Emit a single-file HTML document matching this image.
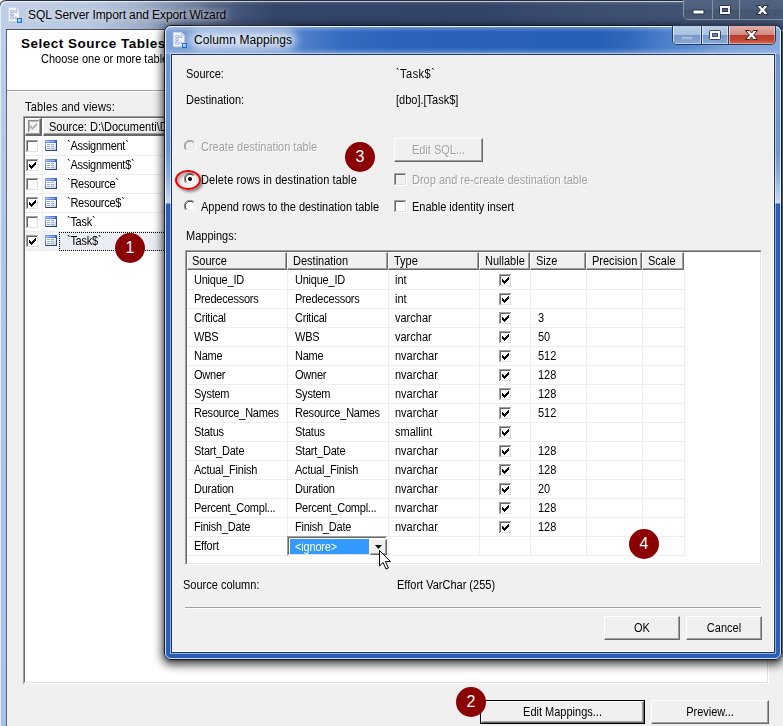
<!DOCTYPE html>
<html lang="en"><head><meta charset="utf-8"><title>SQL Server Import and Export Wizard</title>
<style>
html,body{margin:0;padding:0;}
body{width:783px;height:726px;overflow:hidden;background:#f0f0f0;font-family:"Liberation Sans",sans-serif;font-size:11px;line-height:13px;color:#000;}
#scr{position:relative;width:783px;height:726px;overflow:hidden;background:#f0f0f0;}
#scr div,#scr span,#scr i,#scr b{position:absolute;box-sizing:border-box;white-space:nowrap;}
.t{font-size:11px;line-height:13px;}
/* outer window */
#w1t{left:-1px;top:0;width:785px;height:30px;border-top:1px solid #262e3c;border-left:1px solid #2a3342;border-top-left-radius:7px;box-shadow:inset 1px 1px 0 rgba(255,255,255,.65);background:linear-gradient(180deg,rgba(255,255,255,.18) 0,rgba(255,255,255,0) 4px,rgba(0,0,0,0) 19px,rgba(0,0,10,.0) 30px),linear-gradient(90deg,#c0cfe6 0px,#b9c9e0 90px,#a2b2cc 135px,#8090ae 175px,#596b8b 210px,#42547a 240px,#34456a 275px,#33446a 480px,#3d4f70 600px,#44577a 783px);}
#w1tl{display:none;}
#w1tl2{display:none;}
#w1lf{left:0;top:8px;width:7px;height:718px;background:linear-gradient(180deg,#bfcfe8 0,#b3c7e8 200px,#a9c0e6 726px);}
#w1lfh{left:0;top:8px;width:1px;height:718px;background:#e4ebf5;}
#w1in{left:6px;top:29px;width:777px;height:697px;border-left:1px solid #5a6577;border-top:1px solid #4b5566;background:#f0f0f0;}
#w1hd{left:7px;top:30px;width:776px;height:60px;background:#fff;}
#w1sep{left:7px;top:90px;width:776px;height:2px;border-top:1px solid #a0a0a0;background:#fff;}
#ttl1{left:28px;top:7px;font-size:12px;line-height:16px;color:#000;letter-spacing:-0.100px;text-shadow:0 0 5px rgba(255,255,255,.7),0 0 9px rgba(255,255,255,.45),0 0 13px rgba(255,255,255,.3);}
#h1{left:21px;top:36px;font-size:13.500px;line-height:16px;font-weight:bold;letter-spacing:0.500px;}
#h2{left:41px;top:53px;}
#lbl1{left:25px;top:100px;letter-spacing:.2px;}
/* list box */
#lb{left:23px;top:116px;width:746px;height:568px;background:#fff;border-left:2px solid #696969;border-top:2px solid #696969;border-right:1px solid #fff;border-bottom:1px solid #fff;}
#lb::before{content:"";position:absolute;left:-2px;top:-2px;right:0;bottom:0;border-left:1px solid #a0a0a0;border-top:1px solid #a0a0a0;border-right:1px solid #e3e3e3;border-bottom:1px solid #e3e3e3;}
.lh{top:0;height:18px;background:#f0f0f0;border-top:1px solid #fff;border-left:1px solid #fff;border-right:2px solid #696969;border-bottom:2px solid #696969;}
.lh::after{content:"";position:absolute;right:0;bottom:0;left:0;top:0;border-right:1px solid #a0a0a0;border-bottom:1px solid #a0a0a0;}
.lr{left:0;height:19px;width:743px;border-bottom:1px solid #ededed;}
.lr .x{left:42px;top:3px;letter-spacing:-0.300px;}
.lvl{left:17px;top:18px;width:1px;height:115px;background:#ededed;z-index:2;}
/* classic checkbox */
.cb{width:11px;height:11px;background:#fff;border-top:1px solid #a0a0a0;border-left:1px solid #a0a0a0;border-right:1px solid #e3e3e3;border-bottom:1px solid #e3e3e3;display:block;}
.cb::before{content:"";position:absolute;left:0;top:0;right:0;bottom:0;border-top:1px solid #696969;border-left:1px solid #696969;}
.ck::after{content:"";position:absolute;left:2px;top:0px;width:3px;height:6px;border-right:2px solid #000;border-bottom:2px solid #000;transform:rotate(40deg);}
.cb13{width:13px;height:13px;}
/* icons */
.ti{width:13px;height:11px;}
/* buttons */
.btn{background:#f0f0f0;border-top:1px solid #fff;border-left:1px solid #fff;border-right:1px solid #696969;border-bottom:1px solid #696969;text-align:center;}
.btn::before{content:"";position:absolute;left:0;top:0;right:0;bottom:0;border-right:1px solid #a0a0a0;border-bottom:1px solid #a0a0a0;}
.btn span{left:0;right:0;text-align:center;}
/* badge */
.bd{width:30px;height:30px;border-radius:50%;background:#8b0000;color:#fff;font-size:16px;line-height:30px;text-align:center;}
/* dialog */
#sh{left:160px;top:22px;width:628px;height:646px;border-radius:10px;box-shadow:0 0 0 1px rgba(0,0,0,.0);background:transparent;}
#dlg{left:164px;top:25px;width:618px;height:635px;border-radius:7px;border:1px solid #101c33;background:linear-gradient(180deg,#9dbae3 0,#7fa2d8 5px,#7398d0 30px,#7096d0 125px,#8eafde 150px,#c8daf0 177px,#2a5fb8 178px,#2a5fb8 635px);box-shadow:0 3px 10px 2px rgba(0,0,0,.7),0 1px 3px 0 rgba(0,0,0,.3);}
#dlgi{left:0;top:0;right:0;bottom:0;border-radius:6px;border:1px solid rgba(255,255,255,.8);}
#dtb{left:1px;top:1px;width:614px;height:27px;border-radius:5px 5px 0 0;background:linear-gradient(180deg,rgba(255,255,255,.3) 0,rgba(255,255,255,0) 5px,rgba(255,255,255,0) 21px,rgba(170,200,240,.5) 27px),linear-gradient(100deg,#7fa2d8 0,#7a9dd4 25px,#6c93d0 100px,#4c7dc9 140px,#356cc1 175px,#2b63ba 230px,#2861b7 330px,#2660b6 430px,#2f67bb 455px,#4a7dc9 490px,#5a8ad0 520px,#7da3da 560px,#86aadc 613px);}
#glow2{left:25px;top:5px;width:106px;height:18px;border-radius:9px;background:rgba(255,255,255,.72);filter:blur(5px);}
#dc{left:6px;top:28px;width:604px;height:599px;box-shadow:0 0 0 1px rgba(255,255,255,.5),inset -1px -1px 0 #fff;background:#f0f0f0;border:1px solid #22345a;}
#ttl2{left:29px;top:6px;font-size:12px;line-height:16px;letter-spacing:.1px;}
.dis{color:#a0a0a0;text-shadow:1px 1px 0 #fff;}
/* radio */
.rd{width:12px;height:12px;border-radius:50%;background:#fff;border:1px solid #808080;box-shadow:inset 1px 1px 0 #404040, 1px 1px 0 #fff;}
.rd.on::after{content:"";position:absolute;left:3px;top:3px;width:4px;height:4px;border-radius:50%;background:#000;}
.rd.off{background:#f0f0f0;border-color:#a0a0a0;box-shadow:inset 1px 1px 0 #a0a0a0,1px 1px 0 #fff;}
/* grid */
#gw{left:185px;top:250px;width:577px;height:315px;background:#fff;border-top:1px solid #a0a0a0;border-left:1px solid #a0a0a0;border-right:1px solid #fff;border-bottom:1px solid #fff;}
#gw::before{content:"";position:absolute;left:0;top:0;right:0;bottom:0;border-top:1px solid #696969;border-left:1px solid #696969;border-right:1px solid #e3e3e3;border-bottom:1px solid #e3e3e3;}
.grid{left:187px;top:252px;width:573px;height:311px;}
.gh{top:0;height:18px;background:#f0f0f0;border-top:1px solid #fff;border-left:1px solid #fff;border-right:1px solid #696969;border-bottom:1px solid #696969;}
.gh::before{content:"";position:absolute;left:0;top:0;right:0;bottom:0;border-right:1px solid #a0a0a0;border-bottom:1px solid #a0a0a0;}
.gh span{left:5px;top:2px;}
.gh:first-child span{left:4px;}
.vl{top:18px;width:1px;height:286px;background:#eeeeee;}
.gr{left:0;width:498px;height:19px;border-bottom:1px solid #eeeeee;}
.gr .c{top:3px;letter-spacing:-0.250px;}

/* caption buttons */
.cap{border:1px solid #2a3a58;border-radius:0 0 5px 5px;overflow:hidden;}
.cbn{top:0;height:100%;border-left:1px solid #2a3a58;background:linear-gradient(180deg,#bccfe9 0,#a9c0e2 48%,#7797c9 52%,#86a8d9 100%);box-shadow:inset 1px 0 0 rgba(255,255,255,.6),inset -1px -1px 0 rgba(255,255,255,.45);}
.cbn:first-child{border-left:0;}
.cbn.cls{background:linear-gradient(180deg,#e3aea8 0,#d08a82 48%,#bd3a28 52%,#c34732 80%,#d47258 100%);box-shadow:inset 1px 0 0 rgba(255,255,255,.5),inset -1px -1px 0 rgba(255,255,255,.35);}
.cap.dk{border-color:#8893a8;border-radius:0 0 0 5px;}
.cap.dk .cbn{background:linear-gradient(180deg,#526482 0,#4d5f7d 48%,#44556f 52%,#485a76 100%);border-left-color:#8893a8;box-shadow:none;}
.cb.gy{background:#f0f0f0;}
.cb.gy::after{border-color:#a0a0a0;}

/* taller glyphs with 11px advance widths (MS Sans Serif look) */
.t,.gr .c,.gh span,.lr .x,.lh span,#h2,#combo span{font-size:12px;transform:scaleX(.917);transform-origin:0 0;}
.btn span{font-size:12px;transform:scaleX(.917);transform-origin:50% 0;}
.t{margin-top:1px;}

</style></head>
<body>
<div id="scr">
<svg width="0" height="0" style="position:absolute"><defs><g id="cb0" shape-rendering="crispEdges"><rect width="13" height="13" fill="#fff"/><path d="M0 0h12v1H1v11H0z" fill="#a0a0a0"/><path d="M1 1h10v1H2v9H1z" fill="#696969"/><path d="M11 1h1v11H1v-1h10z" fill="#e3e3e3"/></g><g id="cb1"><use href="#cb0"/><path d="M0 2h1v1h1v1h1v-1h1v-1h1v-1h1v-1h1v3h-1v1h-1v1h-1v1h-1v1h-1v-1h-1v-1h-1z" transform="translate(3,3)" fill="#000" shape-rendering="crispEdges"/></g><g id="cb0w" shape-rendering="crispEdges"><rect width="13" height="13" fill="#fff"/><path d="M0 0h12v1H1v11H0z" fill="#a0a0a0"/><path d="M1 1h10v1H2v9H1z" fill="#696969"/><path d="M11 1h1v11H1v-1h10z" fill="#e3e3e3"/></g><g id="cbd" shape-rendering="crispEdges"><rect width="13" height="13" fill="#f0f0f0"/><path d="M0 0h12v1H1v11H0z" fill="#a0a0a0"/><path d="M1 1h10v1H2v9H1z" fill="#696969"/><path d="M12 0h1v13H0v-1h12z" fill="#fff"/><path d="M11 1h1v11H1v-1h10z" fill="#e3e3e3"/></g><g id="cbg"><use href="#cbd"/><path d="M0 2h1v1h1v1h1v-1h1v-1h1v-1h1v-1h1v3h-1v1h-1v1h-1v1h-1v1h-1v-1h-1v-1h-1z" transform="translate(3,3)" fill="#a0a0a0" shape-rendering="crispEdges"/></g><linearGradient id="tg1" x1="0" y1="0" x2="1" y2="0"><stop offset="0" stop-color="#86a6f0"/><stop offset="1" stop-color="#2c5edb"/></linearGradient><linearGradient id="tg2" x1="0" y1="0" x2="1" y2="1"><stop offset="0" stop-color="#ffffff"/><stop offset=".5" stop-color="#f2f6fd"/><stop offset="1" stop-color="#bccff0"/></linearGradient><linearGradient id="tg3" x1="0" y1="0" x2="0" y2="1"><stop offset="0" stop-color="#8fa6d6"/><stop offset="1" stop-color="#4a5f8c"/></linearGradient><g id="tbl" shape-rendering="crispEdges"><rect x="0" y="0" width="12" height="3" fill="url(#tg1)"/><rect x="1" y="1" width="9" height="1" fill="#b4c8f8" opacity=".75"/><rect x="0" y="3" width="1" height="8" fill="url(#tg3)"/><rect x="1" y="3" width="10" height="7" fill="url(#tg2)"/><rect x="11" y="3" width="1" height="8" fill="#33466a"/><rect x="1" y="10" width="11" height="1" fill="#2f4268"/><path d="M2 4h3v1H2zM6 4h3v1H6zM2 6h3v1H2zM6 6h3v1H6zM2 8h3v1H2zM6 8h3v1H6z" fill="#9aaad2"/></g></defs></svg>
<!-- outer window: SQL Server Import and Export Wizard -->
<div id="w1t"></div>
<div id="w1tl"></div><div id="w1tl2"></div>
<div class="cap dk" style="left:683px;top:-1px;width:110px;height:21px">
  <div class="cbn" style="left:0;width:28px"><svg style="position:absolute;left:8px;top:9px" width="13" height="6"><rect x="1" y="1" width="11" height="4" rx="1" fill="#fff" stroke="#2a3344" stroke-width="1"/></svg></div>
  <div class="cbn" style="left:28px;width:27px"><svg style="position:absolute;left:6px;top:5px" width="13" height="11"><rect x="0.500" y="0.500" width="11" height="9" rx="1" fill="#f4f4f4" stroke="#2a3344"/><rect x="3.500" y="3.500" width="5" height="3" fill="#4d5f7d" stroke="#2f3a4e"/></svg></div>
  <div class="cbn" style="left:55px;width:54px"><svg style="position:absolute;left:15px;top:4px" width="15" height="12" viewBox="0 0 15 12"><path d="M1.500 1.500H5.600L7.500 4 9.400 1.500H13.500L9.700 6 13.500 10.500H9.400L7.500 8 5.600 10.500H1.500L5.300 6z" fill="#fff" stroke="#222a3a" stroke-width="1" stroke-linejoin="round"/></svg></div>
 </div>
<div id="w1lf"></div><div id="w1lfh"></div>
<div id="w1in"></div>
<div id="w1hd"></div>
<div id="w1sep"></div>
<svg style="position:absolute;left:7px;top:6px" width="16" height="18" viewBox="0 0 16 18"><path d="M1.500 1.500h8l3 3v11H1.500z" fill="#f4f7fd" stroke="#cfd8ec" stroke-width="1"/><path d="M2 16h10.500V5" fill="none" stroke="#b9c4dc" stroke-width="1" opacity=".8"/><path d="M9.500 1.500v3h3" fill="#e9eef9" stroke="#c3cee8" stroke-width="1"/><path d="M3.500 4.500h3v2h-3zM3.500 8h3v1.500h-3zM3.500 11h3v2h-3zM5 6.500v1.500M5 9.500v1.500M6.500 5h4M7.500 6.500h3M6.500 12h3.500M8.500 10.500l1.500 1.500-1.500 1.500" stroke="#a9b9ec" stroke-width="1" fill="none"/><rect x="10" y="12" width="5" height="5" fill="#2b6bd9"/><rect x="11" y="13" width="3" height="3" fill="#7cc6fc"/><rect x="11" y="13" width="2" height="2" fill="#a6defe"/></svg>
<div id="ttl1">SQL Server Import and Export Wizard</div>
<div id="h1">Select Source Tables and Views</div>
<div id="h2">Choose one or more tables and views to copy.</div>
<div id="lbl1" class="t">Tables and views:</div>
<div id="lb">
 <div class="lh" style="left:0;width:17px"><svg style="position:absolute;left:2px;top:1px" width="11" height="12" shape-rendering="crispEdges"><rect width="11" height="12" fill="#f4f4f4"/><path d="M0 0h11v1H1v11H0z" fill="#8c8c8c"/><path d="M1 1h9v1H2v9H1z" fill="#b8b8b8"/><path d="M10 1h1v11H1v-1h9z" fill="#fff"/><path d="M2 5h1v1h1v1h1v-1h1v-1h1v-1h1v-1h1v3h-1v1h-1v1h-1v1h-1v1h-1v-1h-1v-1h-1z" fill="#b4b4b4"/></svg></div>
 <div class="lh" style="left:18px;width:400px"><span style="left:5px;top:2px">Source: D:\Documenti\Databases\Project.mdb</span></div>
 <div class="lvl"></div>
 <div class="lr" style="top:19px"><svg style="position:absolute;left:1px;top:3px" width="13" height="13"><use href="#cb0"/></svg><svg style="position:absolute;left:20px;top:3px" width="12" height="11"><use href="#tbl"/></svg><span class="x">`Assignment`</span></div>
 <div class="lr" style="top:38px"><svg style="position:absolute;left:1px;top:3px" width="13" height="13"><use href="#cb1"/></svg><svg style="position:absolute;left:20px;top:3px" width="12" height="11"><use href="#tbl"/></svg><span class="x">`Assignment$`</span></div>
 <div class="lr" style="top:57px"><svg style="position:absolute;left:1px;top:3px" width="13" height="13"><use href="#cb0"/></svg><svg style="position:absolute;left:20px;top:3px" width="12" height="11"><use href="#tbl"/></svg><span class="x">`Resource`</span></div>
 <div class="lr" style="top:76px"><svg style="position:absolute;left:1px;top:3px" width="13" height="13"><use href="#cb1"/></svg><svg style="position:absolute;left:20px;top:3px" width="12" height="11"><use href="#tbl"/></svg><span class="x">`Resource$`</span></div>
 <div class="lr" style="top:95px"><svg style="position:absolute;left:1px;top:3px" width="13" height="13"><use href="#cb0"/></svg><svg style="position:absolute;left:20px;top:3px" width="12" height="11"><use href="#tbl"/></svg><span class="x">`Task`</span></div>
 <div class="lr" style="top:114px;background:#f1f3f7"><div style="left:34px;top:0;width:709px;height:19px;background:#eaedf2;border:1px dotted #000"></div><svg style="position:absolute;left:1px;top:3px" width="13" height="13"><use href="#cb1"/></svg><svg style="position:absolute;left:20px;top:3px" width="12" height="11"><use href="#tbl"/></svg><span class="x">`Task$`</span></div>
</div>
<div class="bd" style="left:115px;top:233px">1</div>
<!-- bottom buttons of wizard -->
<div style="left:480px;top:700px;width:165px;height:24px;background:#000"></div><div class="btn" style="left:481px;top:701px;width:163px;height:22px"><span style="top:4px">Edit Mappings...</span></div>
<div class="btn" style="left:651px;top:700px;width:118px;height:24px"><span style="top:5px">Preview...</span></div>
<div class="bd" style="left:456px;top:687px">2</div>

<!-- dialog: Column Mappings -->
<div id="dlg">
 <div id="dtb"></div>
 <div id="dlgi"></div>
 <div id="glow2"></div>
 <svg style="position:absolute;left:7px;top:5px" width="16" height="18" viewBox="0 0 16 18"><path d="M1.500 1.500h8l3 3v11H1.500z" fill="#f4f7fd" stroke="#cfd8ec" stroke-width="1"/><path d="M2 16h10.500V5" fill="none" stroke="#b9c4dc" stroke-width="1" opacity=".8"/><path d="M9.500 1.500v3h3" fill="#e9eef9" stroke="#c3cee8" stroke-width="1"/><path d="M3.500 4.500h3v2h-3zM3.500 8h3v1.500h-3zM3.500 11h3v2h-3zM5 6.500v1.500M5 9.500v1.500M6.500 5h4M7.500 6.500h3M6.500 12h3.500M8.500 10.500l1.500 1.500-1.500 1.500" stroke="#a9b9ec" stroke-width="1" fill="none"/><rect x="10" y="12" width="5" height="5" fill="#2b6bd9"/><rect x="11" y="13" width="3" height="3" fill="#7cc6fc"/><rect x="11" y="13" width="2" height="2" fill="#a6defe"/></svg>
 <div id="ttl2">Column Mappings</div>
 <!-- caption buttons -->
 <div class="cap" style="left:507px;top:-1px;width:104px;height:20px">
  <div class="cbn" style="left:0;width:28px"><i class="hl"></i><svg style="position:absolute;left:8px;top:10px" width="13" height="5"><rect x="0.500" y="0.500" width="11" height="3" rx="1" fill="#a9bddb" stroke="#8aa3c8"/></svg></div>
  <div class="cbn" style="left:28px;width:27px"><i class="hl"></i><svg style="position:absolute;left:7px;top:4px" width="13" height="11"><rect x="0.500" y="0.500" width="11" height="9" rx="1" fill="#fff" stroke="#3d4a66"/><rect x="3.500" y="3.500" width="5" height="3" fill="#5f86c4" stroke="#46536e"/></svg></div>
  <div class="cbn cls" style="left:55px;width:47px"><i class="hl"></i><svg style="position:absolute;left:15px;top:3px" width="15" height="12" viewBox="0 0 15 12"><path d="M1.500 1.500H5.600L7.500 4 9.400 1.500H13.500L9.700 6 13.500 10.500H9.400L7.500 8 5.600 10.500H1.500L5.300 6z" fill="#fff" stroke="#4a1a18" stroke-width="1" stroke-linejoin="round"/></svg></div>
 </div>
 <div id="dc"></div>
</div>
<!-- dialog content (absolute screen coords) -->
<div class="t" style="left:186px;top:67px">Source:</div>
<div class="t" style="left:186px;top:93px">Destination:</div>
<div class="t" style="left:396px;top:67px;letter-spacing:.5px">`Task$`</div>
<div class="t" style="left:396px;top:93px">[dbo].[Task$]</div>
<svg style="position:absolute;left:184px;top:140px" width="12" height="12" viewBox="0 0 12 12"><circle cx="6" cy="6" r="5" fill="#f0f0f0"/><path d="M1.900 10.100A5.500 5.500 0 0 1 10.100 1.900" fill="none" stroke="#a0a0a0" stroke-width="1"/><path d="M10.100 1.900A5.500 5.500 0 0 1 1.900 10.100" fill="none" stroke="#fff" stroke-width="1"/><path d="M2.700 9.300A4.500 4.500 0 0 1 9.300 2.700" fill="none" stroke="#a0a0a0" stroke-width="1"/><path d="M9.300 2.700A4.500 4.500 0 0 1 2.700 9.300" fill="none" stroke="#e3e3e3" stroke-width="1"/></svg><div class="t dis" style="left:201px;top:140px">Create destination table</div>
<svg style="position:absolute;left:184px;top:173px" width="12" height="12" viewBox="0 0 12 12"><circle cx="6" cy="6" r="5" fill="#fff"/><path d="M1.900 10.100A5.500 5.500 0 0 1 10.100 1.900" fill="none" stroke="#808080" stroke-width="1"/><path d="M10.100 1.900A5.500 5.500 0 0 1 1.900 10.100" fill="none" stroke="#fff" stroke-width="1"/><path d="M2.700 9.300A4.500 4.500 0 0 1 9.300 2.700" fill="none" stroke="#404040" stroke-width="1"/><path d="M9.300 2.700A4.500 4.500 0 0 1 2.700 9.300" fill="none" stroke="#e3e3e3" stroke-width="1"/><circle cx="6" cy="6" r="2" fill="#000"/></svg><div class="t" style="left:201px;top:173px;letter-spacing:.1px">Delete rows in destination table</div>
<svg style="position:absolute;left:184px;top:200px" width="12" height="12" viewBox="0 0 12 12"><circle cx="6" cy="6" r="5" fill="#fff"/><path d="M1.900 10.100A5.500 5.500 0 0 1 10.100 1.900" fill="none" stroke="#808080" stroke-width="1"/><path d="M10.100 1.900A5.500 5.500 0 0 1 1.900 10.100" fill="none" stroke="#fff" stroke-width="1"/><path d="M2.700 9.300A4.500 4.500 0 0 1 9.300 2.700" fill="none" stroke="#404040" stroke-width="1"/><path d="M9.300 2.700A4.500 4.500 0 0 1 2.700 9.300" fill="none" stroke="#e3e3e3" stroke-width="1"/></svg><div class="t" style="left:201px;top:200px">Append rows to the destination table</div>
<div style="left:175px;top:170px;width:26px;height:20px;border:2px solid #f00000;border-radius:50%;box-shadow:2px 2px 3px rgba(0,0,0,.45),inset 2px 2px 3px rgba(0,0,0,.3)"></div>
<div class="bd" style="left:345px;top:142px">3</div>
<div class="btn" style="left:394px;top:138px;width:89px;height:24px"><span class="dis" style="top:5px">Edit SQL...</span></div>
<svg style="position:absolute;left:394px;top:173px" width="13" height="13"><use href="#cbd"/></svg><div class="t dis" style="left:412px;top:173px">Drop and re-create destination table</div>
<svg style="position:absolute;left:394px;top:200px" width="13" height="13"><use href="#cb0w"/></svg><div class="t" style="left:412px;top:200px">Enable identity insert</div>
<div class="t" style="left:186px;top:229px">Mappings:</div>
<div id="gw"></div>
<div class="grid">
<div class="gh" style="left:0px;width:100px"><span>Source</span></div>
<div class="gh" style="left:100px;width:101px"><span>Destination</span></div>
<div class="gh" style="left:201px;width:91px"><span>Type</span></div>
<div class="gh" style="left:292px;width:51px"><span>Nullable</span></div>
<div class="gh" style="left:343px;width:56px"><span>Size</span></div>
<div class="gh" style="left:399px;width:56px"><span>Precision</span></div>
<div class="gh" style="left:455px;width:42px"><span>Scale</span></div>
<div class="vl" style="left:100px"></div>
<div class="vl" style="left:201px"></div>
<div class="vl" style="left:292px"></div>
<div class="vl" style="left:343px"></div>
<div class="vl" style="left:399px"></div>
<div class="vl" style="left:455px"></div>
<div class="vl" style="left:497px"></div>
<div class="gr" style="top:18px;height:20px">
<span class="c" style="left:7px;top:4px">Unique_ID</span>
<span class="c" style="left:108px;top:4px">Unique_ID</span>
<span class="c" style="left:208px;top:4px;letter-spacing:0">int</span>
<svg style="position:absolute;left:312px;top:4px" width="13" height="13"><use href="#cb1"/></svg>
</div>
<div class="gr" style="top:38px;height:19px">
<span class="c" style="left:7px;top:3px">Predecessors</span>
<span class="c" style="left:108px;top:3px">Predecessors</span>
<span class="c" style="left:208px;top:3px;letter-spacing:0">int</span>
<svg style="position:absolute;left:312px;top:3px" width="13" height="13"><use href="#cb1"/></svg>
</div>
<div class="gr" style="top:57px;height:19px">
<span class="c" style="left:7px;top:3px">Critical</span>
<span class="c" style="left:108px;top:3px">Critical</span>
<span class="c" style="left:208px;top:3px;letter-spacing:0">varchar</span>
<svg style="position:absolute;left:312px;top:3px" width="13" height="13"><use href="#cb1"/></svg>
<span class="c" style="left:351px;top:3px;letter-spacing:0">3</span>
</div>
<div class="gr" style="top:76px;height:19px">
<span class="c" style="left:7px;top:3px">WBS</span>
<span class="c" style="left:108px;top:3px">WBS</span>
<span class="c" style="left:208px;top:3px;letter-spacing:0">varchar</span>
<svg style="position:absolute;left:312px;top:3px" width="13" height="13"><use href="#cb1"/></svg>
<span class="c" style="left:351px;top:3px;letter-spacing:0">50</span>
</div>
<div class="gr" style="top:95px;height:19px">
<span class="c" style="left:7px;top:3px">Name</span>
<span class="c" style="left:108px;top:3px">Name</span>
<span class="c" style="left:208px;top:3px;letter-spacing:0">nvarchar</span>
<svg style="position:absolute;left:312px;top:3px" width="13" height="13"><use href="#cb1"/></svg>
<span class="c" style="left:351px;top:3px;letter-spacing:0">512</span>
</div>
<div class="gr" style="top:114px;height:19px">
<span class="c" style="left:7px;top:3px">Owner</span>
<span class="c" style="left:108px;top:3px">Owner</span>
<span class="c" style="left:208px;top:3px;letter-spacing:0">nvarchar</span>
<svg style="position:absolute;left:312px;top:3px" width="13" height="13"><use href="#cb1"/></svg>
<span class="c" style="left:351px;top:3px;letter-spacing:0">128</span>
</div>
<div class="gr" style="top:133px;height:19px">
<span class="c" style="left:7px;top:3px">System</span>
<span class="c" style="left:108px;top:3px">System</span>
<span class="c" style="left:208px;top:3px;letter-spacing:0">nvarchar</span>
<svg style="position:absolute;left:312px;top:3px" width="13" height="13"><use href="#cb1"/></svg>
<span class="c" style="left:351px;top:3px;letter-spacing:0">128</span>
</div>
<div class="gr" style="top:152px;height:19px">
<span class="c" style="left:7px;top:3px">Resource_Names</span>
<span class="c" style="left:108px;top:3px">Resource_Names</span>
<span class="c" style="left:208px;top:3px;letter-spacing:0">nvarchar</span>
<svg style="position:absolute;left:312px;top:3px" width="13" height="13"><use href="#cb1"/></svg>
<span class="c" style="left:351px;top:3px;letter-spacing:0">512</span>
</div>
<div class="gr" style="top:171px;height:19px">
<span class="c" style="left:7px;top:3px">Status</span>
<span class="c" style="left:108px;top:3px">Status</span>
<span class="c" style="left:208px;top:3px;letter-spacing:0">smallint</span>
<svg style="position:absolute;left:312px;top:3px" width="13" height="13"><use href="#cb1"/></svg>
</div>
<div class="gr" style="top:190px;height:19px">
<span class="c" style="left:7px;top:3px">Start_Date</span>
<span class="c" style="left:108px;top:3px">Start_Date</span>
<span class="c" style="left:208px;top:3px;letter-spacing:0">nvarchar</span>
<svg style="position:absolute;left:312px;top:3px" width="13" height="13"><use href="#cb1"/></svg>
<span class="c" style="left:351px;top:3px;letter-spacing:0">128</span>
</div>
<div class="gr" style="top:209px;height:19px">
<span class="c" style="left:7px;top:3px">Actual_Finish</span>
<span class="c" style="left:108px;top:3px">Actual_Finish</span>
<span class="c" style="left:208px;top:3px;letter-spacing:0">nvarchar</span>
<svg style="position:absolute;left:312px;top:3px" width="13" height="13"><use href="#cb1"/></svg>
<span class="c" style="left:351px;top:3px;letter-spacing:0">128</span>
</div>
<div class="gr" style="top:228px;height:19px">
<span class="c" style="left:7px;top:3px">Duration</span>
<span class="c" style="left:108px;top:3px">Duration</span>
<span class="c" style="left:208px;top:3px;letter-spacing:0">nvarchar</span>
<svg style="position:absolute;left:312px;top:3px" width="13" height="13"><use href="#cb1"/></svg>
<span class="c" style="left:351px;top:3px;letter-spacing:0">20</span>
</div>
<div class="gr" style="top:247px;height:19px">
<span class="c" style="left:7px;top:3px">Percent_Compl...</span>
<span class="c" style="left:108px;top:3px">Percent_Compl...</span>
<span class="c" style="left:208px;top:3px;letter-spacing:0">nvarchar</span>
<svg style="position:absolute;left:312px;top:3px" width="13" height="13"><use href="#cb1"/></svg>
<span class="c" style="left:351px;top:3px;letter-spacing:0">128</span>
</div>
<div class="gr" style="top:266px;height:19px">
<span class="c" style="left:7px;top:3px">Finish_Date</span>
<span class="c" style="left:108px;top:3px">Finish_Date</span>
<span class="c" style="left:208px;top:3px;letter-spacing:0">nvarchar</span>
<svg style="position:absolute;left:312px;top:3px" width="13" height="13"><use href="#cb1"/></svg>
<span class="c" style="left:351px;top:3px;letter-spacing:0">128</span>
</div>
<div class="gr" style="top:285px;height:19px">
<span class="c" style="left:7px;top:3px">Effort</span>
</div>
</div>
<!-- combo in Effort row -->
<div id="combo" style="left:287px;top:536px;width:100px;height:20px;background:#fff;border-top:1px solid #a0a0a0;border-left:1px solid #a0a0a0;border-right:1px solid #fff;border-bottom:1px solid #fff">
 <div style="left:0;top:0;width:98px;height:18px;border-top:1px solid #696969;border-left:1px solid #696969;border-right:1px solid #e3e3e3;border-bottom:1px solid #e3e3e3"></div>
 <div style="left:2px;top:2px;width:79px;height:15px;background:#3399ff;color:#fff"><span style="left:5px;top:2px;letter-spacing:-0.2px">&lt;ignore&gt;</span></div>
 <div class="btn" style="left:82px;top:2px;width:17px;height:16px"><svg style="position:absolute;left:4px;top:5px" width="7" height="4"><path d="M0 0h7L3.500 4z" fill="#000"/></svg></div>
</div>
<div class="bd" style="left:629px;top:529px">4</div>
<div class="t" style="left:183px;top:578px">Source column:</div>
<div class="t" style="left:397px;top:578px">Effort VarChar (255)</div>
<div style="left:185px;top:607px;width:576px;height:2px;border-top:1px solid #a0a0a0;background:#fff"></div>
<div class="btn" style="left:604px;top:616px;width:76px;height:24px"><span style="top:5px">OK</span></div>
<div class="btn" style="left:686px;top:616px;width:76px;height:24px"><span style="top:5px">Cancel</span></div>
<div style="left:782px;top:31px;width:1px;height:626px;background:linear-gradient(180deg,#444d44 0,#4a4f4a 60px,#585858 160px,#606060 626px)"></div>
<!-- mouse cursor -->
<svg style="position:absolute;left:378px;top:549px" width="14" height="22" viewBox="0 0 14 22"><path d="M1.500 1.500v15.500l3.600-3.500 2.900 6.500 2.400-1-2.900-6.400h5z" fill="#fff" stroke="#000" stroke-width="1" stroke-linejoin="miter"/></svg>
</div>

</body></html>
